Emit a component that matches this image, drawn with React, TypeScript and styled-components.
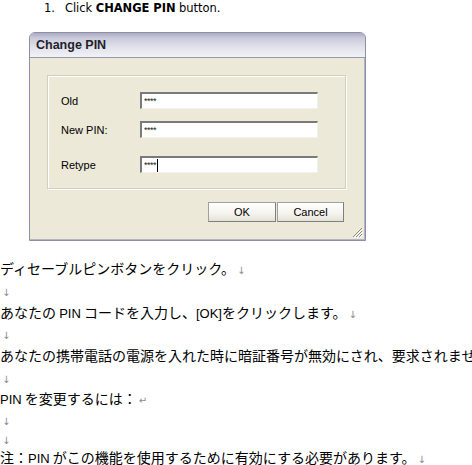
import React from "react";
import styled, { createGlobalStyle } from "styled-components";

const GlobalStyle = createGlobalStyle`
	html, body {
		margin: 0;
		padding: 0;
		background: #ffffff;
	}
	body {
		width: 472px;
		height: 465px;
		overflow: hidden;
	}
`;

type FieldRowProps = {
	$top: number;
};

type InputProps = {
	$caret?: boolean;
};

type ButtonProps = {
	$width: number;
};

type LineProps = {
	$height?: number;
};

const fields = [
	{ label: "Old", top: 16 },
	{ label: "New PIN:", top: 12 },
	{ label: "Retype", top: 18, caret: true },
];

const App = () => {
	return (
		<StyledPage>
			<GlobalStyle />
			<StyledStep>
				<StyledStepNumber>1.</StyledStepNumber>
				<span>
					Click <b>CHANGE PIN</b> button.
				</span>
			</StyledStep>
			<StyledDialog>
				<StyledTitleBar>Change PIN</StyledTitleBar>
				<StyledDialogBody>
					<StyledGroupBox>
						{fields.map((field) => (
							<StyledFieldRow key={field.label} $top={field.top}>
								<StyledLabel>{field.label}</StyledLabel>
								<StyledInput $caret={field.caret}>****</StyledInput>
							</StyledFieldRow>
						))}
					</StyledGroupBox>
					<StyledButtonBar>
						<StyledButton $width={68}>OK</StyledButton>
						<StyledButton $width={67}>Cancel</StyledButton>
					</StyledButtonBar>
					<StyledGrip viewBox="0 0 12 12" width="12" height="12">
						<path d="M11 2 L2 11 M11 5 L5 11 M11 8 L8 11" stroke="#8d8d7a" strokeWidth="1" />
						<path d="M12 3 L3 12 M12 6 L6 12 M12 9 L9 12" stroke="#ffffff" strokeWidth="1" />
					</StyledGrip>
				</StyledDialogBody>
			</StyledDialog>
			<StyledDoc>
				<StyledLine>
					ディセーブルピンボタンをクリック。<StyledMark>↓</StyledMark>
				</StyledLine>
				<StyledLine>
					<StyledMark>↓</StyledMark>
				</StyledLine>
				<StyledLine>
					あなたの <StyledLatin>PIN</StyledLatin> コードを入力し、
					<StyledLatin>[OK]</StyledLatin>をクリックします。<StyledMark>↓</StyledMark>
				</StyledLine>
				<StyledLine $height={21}>
					<StyledMark>↓</StyledMark>
				</StyledLine>
				<StyledLine>
					あなたの携帯電話の電源を入れた時に暗証番号が無効にされ、要求されませ
				</StyledLine>
				<StyledLine>
					<StyledMark>↓</StyledMark>
				</StyledLine>
				<StyledLine $height={21}>
					<StyledLatin>PIN</StyledLatin> を変更するには：<StyledMark>↵</StyledMark>
				</StyledLine>
				<StyledLine $height={20}>
					<StyledMark>↓</StyledMark>
				</StyledLine>
				<StyledLine $height={19}>
					<StyledMark>↓</StyledMark>
				</StyledLine>
				<StyledLine $height={18}>
					注：<StyledLatin>PIN</StyledLatin> がこの機能を使用するために有効にする必要があります。
					<StyledMark>↓</StyledMark>
				</StyledLine>
			</StyledDoc>
		</StyledPage>
	);
};

export default App;

const StyledPage = styled.div`
	display: flex;
	flex-direction: column;
	width: 472px;
	height: 465px;
	overflow: hidden;
	& > * {
		flex-shrink: 0;
	}
`;

const StyledStep = styled.div`
	display: flex;
	align-items: center;
	height: 16px;
	padding-left: 44px;
	font-family: "DejaVu Sans", Verdana, sans-serif;
	font-size: 11.5px;
	color: #000000;
	letter-spacing: -0.05px;
`;

const StyledStepNumber = styled.span`
	width: 21px;
`;

const StyledDialog = styled.div`
	position: relative;
	display: flex;
	flex-direction: column;
	width: 337px;
	height: 209px;
	margin-top: 16px;
	margin-left: 29px;
	box-sizing: border-box;
	border: 1px solid #8e8ea8;
	border-top-left-radius: 6px;
	border-top-right-radius: 6px;
	background: #ece9d8;
	box-shadow: inset -1px -1px 0 #b4b4c8;
	overflow: hidden;
`;

const StyledTitleBar = styled.div`
	display: flex;
	align-items: center;
	flex-shrink: 0;
	height: 25px;
	padding-left: 6px;
	box-sizing: border-box;
	background: linear-gradient(
		to bottom,
		#a9a9c2 0%,
		#c9c9da 20%,
		#e2e2ec 60%,
		#f1f1f6 100%
	);
	border-bottom: 1px solid #9797b0;
	font-family: "Liberation Sans", Arial, sans-serif;
	font-weight: bold;
	font-size: 12.5px;
	color: #1f1f2a;
`;

const StyledDialogBody = styled.div`
	position: relative;
	flex: 1;
	display: flex;
	flex-direction: column;
	padding: 17px 19px 0 17px;
`;

const StyledGroupBox = styled.div`
	display: flex;
	flex-direction: column;
	flex-shrink: 0;
	height: 114px;
	box-sizing: border-box;
	border: 1px solid #d0d0bf;
	box-shadow: inset 1px 1px 0 #ffffff, 1px 1px 0 #ffffff;
`;

const StyledFieldRow = styled.div<FieldRowProps>`
	display: flex;
	align-items: center;
	margin-top: ${(props) => props.$top}px;
	padding-left: 13px;
`;

const StyledLabel = styled.span`
	width: 79px;
	font-family: "Liberation Sans", Arial, sans-serif;
	font-size: 11px;
	color: #000000;
`;

const StyledInput = styled.div<InputProps>`
	display: flex;
	align-items: center;
	width: 178px;
	height: 17px;
	box-sizing: border-box;
	padding-left: 2px;
	background: #ffffff;
	border-top: 2px solid #7a7a7a;
	border-left: 2px solid #7a7a7a;
	border-right: 1px solid #f2f1ea;
	border-bottom: 1px solid #f2f1ea;
	font-family: "Liberation Sans", Arial, sans-serif;
	font-size: 9px;
	letter-spacing: -0.5px;
	color: #222222;
	&::after {
		content: "";
		display: ${(props) => (props.$caret ? "block" : "none")};
		width: 1px;
		height: 13px;
		margin-left: 1px;
		background: #000000;
	}
`;

const StyledButtonBar = styled.div`
	display: flex;
	justify-content: flex-end;
	gap: 1px;
	margin-top: 13px;
	margin-right: 2px;
`;

const StyledButton = styled.div<ButtonProps>`
	display: flex;
	align-items: center;
	justify-content: center;
	width: ${(props) => props.$width}px;
	height: 20px;
	box-sizing: border-box;
	background: linear-gradient(to bottom, #ffffff 0%, #f4f3ee 60%, #e4e2d6 100%);
	border: 1px solid #7f7f7f;
	border-top-color: #a0a0a0;
	border-left-color: #a0a0a0;
	font-family: "Liberation Sans", Arial, sans-serif;
	font-size: 11px;
	color: #000000;
`;

const StyledGrip = styled.svg`
	position: absolute;
	right: 2px;
	bottom: 2px;
`;

const StyledDoc = styled.div`
	display: flex;
	flex-direction: column;
	margin-top: 16px;
	font-family: "Noto Sans CJK JP", sans-serif;
	font-size: 14px;
	color: #000000;
	white-space: nowrap;
`;

const StyledLine = styled.div<LineProps>`
	flex-shrink: 0;
	height: ${(props) => props.$height ?? 22}px;
	line-height: ${(props) => props.$height ?? 22}px;
`;

const StyledLatin = styled.span`
	font-family: "Liberation Sans", Arial, sans-serif;
	font-size: 13px;
`;

const StyledMark = styled.span`
	font-family: "DejaVu Sans", sans-serif;
	font-size: 10px;
	color: #8a8a8a;
	margin-left: 2px;
`;
